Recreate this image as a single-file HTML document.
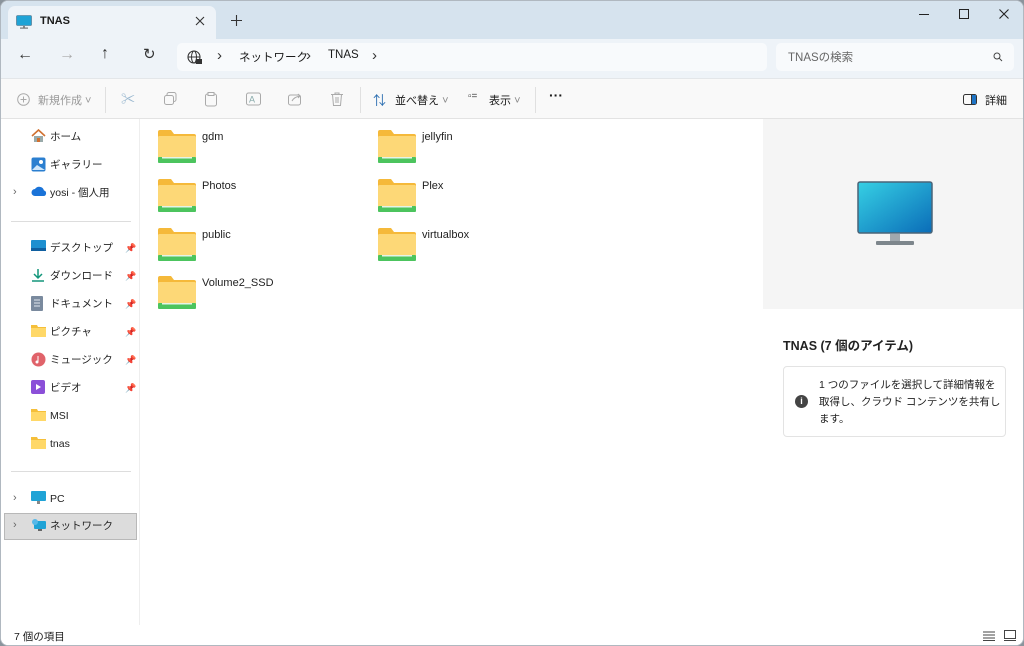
<!DOCTYPE html>
<html><head><meta charset="utf-8">
<style>
*{box-sizing:border-box;margin:0;padding:0}
body{width:1024px;height:646px;overflow:hidden;background:#8a949c;font-family:"Liberation Sans","Noto Sans CJK JP",sans-serif;font-size:11px;color:#1a1a1a;position:relative}
.win{position:absolute;left:0;top:0;width:1024px;height:646px;background:#fff;border-radius:8px;overflow:hidden;border:1px solid #b0b8c0}
.abs{position:absolute}
.title{left:0;top:0;width:1024px;height:38px;background:#d6e3ee}
.tab{left:7px;top:5px;width:208px;height:34px;background:#eef3f8;border-radius:7px 7px 0 0}
.navrow{left:0;top:38px;width:1024px;height:39px;background:#eef3f8}
.addr{left:176px;top:4px;width:590px;height:28px;background:#f8fafc;border-radius:5px}
.search{left:775px;top:4px;width:238px;height:28px;background:#f8fafc;border-radius:5px}
.tool{left:0;top:77px;width:1024px;height:41px;background:#f9f9f9;border-top:1px solid #e3e6e9;border-bottom:1px solid #e3e3e3}
.side{left:0;top:118px;width:139px;height:506px;background:#fff;border-right:1px solid #eee}
.item{position:absolute;left:30px;font-size:10.5px;height:16px;line-height:16px;color:#222}
.item svg{position:absolute;left:0;top:0}
.item span{position:absolute;left:19px;white-space:nowrap}
.pin{position:absolute;left:124px;color:#888;font-size:9px}
.chev{position:absolute;left:12px;color:#666;font-size:11px}
.fold{position:absolute;width:200px;height:40px}
.fold span{position:absolute;left:44px;top:1px;font-size:11px;color:#222}
.det{left:762px;top:118px;width:262px;height:506px;background:#fff}
.status{left:0;top:624px;width:1024px;height:22px;background:#fff}
.sep{position:absolute;top:8px;width:1px;height:26px;background:#e0e0e0}
.ic{position:absolute;top:13px}
</style></head><body>
<div class="win">
<div class="abs title">
 <div class="abs tab">
  <svg class="abs" style="left:8px;top:9px" width="16" height="14" viewBox="0 0 16 14"><rect x="0.5" y="0.5" width="15" height="10" rx="1" fill="#1fa3d6" stroke="#4a6a80" stroke-width=".6"/><rect x="7" y="11" width="2" height="2" fill="#888"/><rect x="4" y="12.5" width="8" height="1.2" fill="#777"/></svg>
  <span class="abs" style="left:32px;top:9px;font-size:11px;font-weight:bold">TNAS</span>
  <svg class="abs" style="left:187px;top:10px" width="10" height="10"><path d="M1 1l8 8M9 1l-8 8" stroke="#333" stroke-width="1.1"/></svg>
 </div>
 <svg class="abs" style="left:230px;top:14px" width="11" height="11"><path d="M5.5 0v11M0 5.5h11" stroke="#333" stroke-width="1.1"/></svg>
 <div class="abs" style="left:918px;top:13px;width:10px;height:1px;background:#222"></div>
 <div class="abs" style="left:958px;top:8px;width:10px;height:10px;border:1px solid #222"></div>
 <svg class="abs" style="left:998px;top:8px" width="10" height="10"><path d="M0.5 0.5l9 9M9.5 0.5l-9 9" stroke="#222" stroke-width="1.1"/></svg>
</div>
<div class="abs navrow">
 <span class="abs" style="left:16px;top:7px;font-size:16px;color:#333">←</span>
 <span class="abs" style="left:58px;top:7px;font-size:16px;color:#aaa">→</span>
 <span class="abs" style="left:100px;top:6px;font-size:16px;color:#333">↑</span>
 <span class="abs" style="left:142px;top:6px;font-size:15px;color:#333">↻</span>
 <div class="abs addr">
  <svg class="abs" style="left:10px;top:7px" width="16" height="16" viewBox="0 0 16 16"><circle cx="7" cy="7" r="6" fill="none" stroke="#333" stroke-width="1.1"/><ellipse cx="7" cy="7" rx="2.5" ry="6" fill="none" stroke="#333" stroke-width="1"/><line x1="1" y1="7" x2="13" y2="7" stroke="#333"/><rect x="9" y="9" width="6" height="5" fill="#333"/></svg>
  <span class="abs" style="left:40px;top:4px;color:#333;font-size:15px">›</span>
  <span class="abs" style="left:62px;top:6px;font-size:11.5px">ネットワーク</span>
  <span class="abs" style="left:129px;top:4px;color:#333;font-size:15px">›</span>
  <span class="abs" style="left:151px;top:6px;font-size:11.5px">TNAS</span>
  <span class="abs" style="left:195px;top:4px;color:#333;font-size:15px">›</span>
 </div>
 <div class="abs search">
  <span class="abs" style="left:12px;top:6px;color:#666;font-size:11.5px">TNASの検索</span>
  <svg class="abs" style="left:217px;top:9px" width="10" height="10" viewBox="0 0 10 10"><circle cx="4" cy="4" r="3" fill="none" stroke="#444"/><line x1="6.3" y1="6.3" x2="9" y2="9" stroke="#444"/></svg>
 </div>
</div>
<div class="abs tool">
 <svg class="abs" style="left:16px;top:14px" width="13" height="13"><circle cx="6.5" cy="6.5" r="5.8" fill="none" stroke="#aaa"/><path d="M6.5 3.5v6M3.5 6.5h6" stroke="#aaa"/></svg>
 <span class="abs" style="left:37px;top:13px;color:#999">新規作成 ˅</span>
 <div class="sep" style="left:104px"></div>
 <span class="ic" style="left:120px;color:#9ab8d0;font-size:14px;top:10px">✂</span>
 <svg class="ic" style="left:163px" width="13" height="14"><rect x="3" y="0.5" width="9" height="9" rx="2" fill="none" stroke="#aaa"/><rect x="0.5" y="3.5" width="9" height="9" rx="2" fill="#f9f9f9" stroke="#aaa"/></svg>
 <svg class="ic" style="left:204px" width="12" height="15"><rect x="0.5" y="2" width="11" height="12" rx="2" fill="none" stroke="#aaa"/><rect x="3" y="0.5" width="6" height="3" fill="#f9f9f9" stroke="#aaa"/></svg>
 <svg class="ic" style="left:245px" width="15" height="14"><rect x="0.5" y="1" width="14" height="12" rx="2" fill="none" stroke="#aaa"/><text x="3" y="10.5" font-size="9" fill="#8aa">A</text></svg>
 <svg class="ic" style="left:287px" width="14" height="14"><rect x="0.5" y="3" width="12" height="10" rx="2" fill="none" stroke="#aaa"/><path d="M4 9 Q6 5 12 4 M10 2l2 2-2 2" fill="none" stroke="#aaa"/></svg>
 <svg class="ic" style="left:330px" width="12" height="14"><path d="M0 2.5h12M4 2.5V1h4v1.5M1.5 2.5l1 11h7l1-11M5 5v6M7 5v6" fill="none" stroke="#aaa"/></svg>
 <div class="sep" style="left:359px"></div>
 <span class="abs" style="left:372px;top:11px;font-size:13px;color:#2a6db0">⇅</span>
 <span class="abs" style="left:394px;top:13px">並べ替え <span style="color:#888">˅</span></span>
 <span class="abs" style="left:467px;top:12px;font-size:10px;color:#444">▫=</span>
 <span class="abs" style="left:488px;top:13px">表示 <span style="color:#888">˅</span></span>
 <div class="sep" style="left:534px"></div>
 <span class="abs" style="left:548px;top:8px;font-size:14px;font-weight:bold">···</span>
 <svg class="abs" style="left:962px;top:15px" width="14" height="11"><rect x="0.5" y="0.5" width="13" height="10" rx="2" fill="none" stroke="#333"/><rect x="8" y="1" width="1" height="9" fill="#333"/><rect x="9" y="1" width="4" height="9" fill="#1f74c5"/></svg>
 <span class="abs" style="left:984px;top:13px">詳細</span>
</div>
<div class="abs side">
 <div class="item" style="top:10px"><svg width="15" height="14"><path d="M1 7L7.5 1 14 7" fill="none" stroke="#d07030" stroke-width="1.6"/><rect x="3" y="7" width="9" height="6" fill="#9aa"/><rect x="6" y="9" width="3" height="4" fill="#d07030"/></svg><span>ホーム</span></div>
 <div class="item" style="top:38px"><svg width="15" height="15"><rect x="0.5" y="0.5" width="14" height="14" rx="2" fill="#2b7fd0"/><path d="M1 13 L6 8 L14 13Z" fill="#cfe6fa"/><circle cx="10" cy="5" r="2" fill="#fff"/></svg><span>ギャラリー</span></div>
 <span class="chev" style="top:67px">›</span>
 <div class="item" style="top:66px"><svg width="16" height="12"><path d="M4 11a3.5 3.5 0 010-7 5 5 0 019 1.5 2.8 2.8 0 01-.5 5.5z" fill="#1a73d8"/></svg><span>yosi - 個人用</span></div>
 <div class="abs" style="left:10px;top:102px;width:120px;height:1px;background:#ddd"></div>
 <div class="item" style="top:121px"><svg width="15" height="12"><rect width="15" height="11" rx="1" fill="#1d8fd0"/><rect y="8" width="15" height="3" fill="#0f5fa0"/></svg><span>デスクトップ</span></div><span class="pin" style="top:124px">📌</span>
 <div class="item" style="top:149px"><svg width="14" height="14"><path d="M7 1v9M3 6l4 4 4-4" fill="none" stroke="#12967a" stroke-width="1.5"/><path d="M1 13h12" stroke="#12967a" stroke-width="1.5"/></svg><span>ダウンロード</span></div><span class="pin" style="top:152px">📌</span>
 <div class="item" style="top:177px"><svg width="12" height="15"><rect width="12" height="15" rx="1" fill="#7a8a9e"/><path d="M3 4h6M3 7h6M3 10h6" stroke="#e0e6ee"/></svg><span>ドキュメント</span></div><span class="pin" style="top:180px">📌</span>
 <div class="item" style="top:205px"><svg width="15" height="13"><path d="M0 1h6l1 2h8v10H0z" fill="#f5bf3a"/><rect y="4" width="15" height="9" fill="#ffd868"/></svg><span>ピクチャ</span></div><span class="pin" style="top:208px">📌</span>
 <div class="item" style="top:233px"><svg width="15" height="15"><circle cx="7.5" cy="7.5" r="7" fill="#e0636a"/><path d="M7 4v6" stroke="#fff"/><circle cx="6" cy="10" r="1.5" fill="#fff"/></svg><span>ミュージック</span></div><span class="pin" style="top:236px">📌</span>
 <div class="item" style="top:261px"><svg width="14" height="14"><rect width="14" height="14" rx="2" fill="#8b4fd8"/><path d="M5 4l5 3-5 3z" fill="#fff"/></svg><span>ビデオ</span></div><span class="pin" style="top:264px">📌</span>
 <div class="item" style="top:289px"><svg width="15" height="13"><path d="M0 1h6l1 2h8v10H0z" fill="#f5bf3a"/><rect y="4" width="15" height="9" fill="#ffd868"/></svg><span>MSI</span></div>
 <div class="item" style="top:317px"><svg width="15" height="13"><path d="M0 1h6l1 2h8v10H0z" fill="#f5bf3a"/><rect y="4" width="15" height="9" fill="#ffd868"/></svg><span>tnas</span></div>
 <div class="abs" style="left:10px;top:352px;width:120px;height:1px;background:#ddd"></div>
 <span class="chev" style="top:373px">›</span>
 <div class="item" style="top:372px"><svg width="15" height="14"><rect width="15" height="10" rx="1" fill="#1fa3d6"/><rect x="6" y="10" width="3" height="3" fill="#888"/></svg><span>PC</span></div>
 <div class="abs" style="left:3px;top:394px;width:133px;height:27px;background:#dcdcdc;border:1px solid #b8b8b8"></div>
 <span class="chev" style="top:400px">›</span>
 <div class="item" style="top:399px"><svg width="16" height="14"><rect x="3" y="3" width="12" height="8" rx="1" fill="#1fa3d6"/><rect x="7" y="11" width="4" height="2" fill="#666"/><circle cx="4" cy="4" r="3" fill="#56b8e8"/></svg><span>ネットワーク</span></div>
</div>
<div class="abs" style="left:139px;top:118px;width:623px;height:506px;background:#fff">
 <div id="folders"></div>
</div>
<div class="abs det">
 <div class="abs" style="left:0;top:0;width:262px;height:190px;background:#f5f5f5"></div>
 <svg class="abs" style="left:94px;top:62px" width="76" height="66" viewBox="0 0 76 66"><defs><linearGradient id="g" x1="0" y1="0" x2="1" y2="1"><stop offset="0" stop-color="#36d0e4"/><stop offset="1" stop-color="#0a6cb8"/></linearGradient></defs><rect x="1" y="1" width="74" height="51" rx="2" fill="url(#g)" stroke="#4a6478" stroke-width="1.5"/><rect x="33" y="53" width="10" height="7" fill="#a0a8ae"/><rect x="19" y="60" width="38" height="4" rx="1" fill="#7d868c"/></svg>
 <div class="abs" style="left:20px;top:216px;font-size:12.5px;font-weight:bold;color:#222">TNAS (7 個のアイテム)</div>
 <div class="abs" style="left:20px;top:247px;width:223px;height:71px;border:1px solid #e3e3e3;border-radius:4px;background:#fff">
  <div class="abs" style="left:11px;top:28px;width:13px;height:13px;border-radius:50%;background:#444;color:#fff;font-size:9px;text-align:center;line-height:13px;font-weight:bold">i</div>
  <div class="abs" style="left:35px;top:10px;width:186px;font-size:10.5px;line-height:17px;color:#222">1 つのファイルを選択して詳細情報を取得し、クラウド コンテンツを共有します。</div>
 </div>
</div>
<div class="abs status">
 <span class="abs" style="left:13px;top:4px;font-size:10.5px">7 個の項目</span>
 <svg class="abs" style="left:982px;top:6px" width="12" height="10"><path d="M0 1h12M0 4h12M0 7h12M0 9.5h12" stroke="#444"/></svg>
 <svg class="abs" style="left:1003px;top:5px" width="12" height="11"><rect x="0.5" y="0.5" width="11" height="8" fill="none" stroke="#444"/><path d="M0 10.5h12" stroke="#444"/></svg>
</div>
</div>
<script>
var f=[["gdm",0,0],["jellyfin",1,0],["Photos",0,1],["Plex",1,1],["public",0,2],["virtualbox",1,2],["Volume2_SSD",0,3]];
var h="";
f.forEach(function(a){
 var x=18+a[1]*220,y=11+[0,49,98,146][a[2]];
 h+='<div class="fold" style="left:'+x+'px;top:'+y+'px"><svg width="38" height="34" viewBox="0 0 38 34"><path d="M0 2a2 2 0 012-2h11l3 4h20a2 2 0 012 2v26H0z" fill="#f5b93a"/><rect x="0" y="6" width="38" height="26" rx="1.5" fill="#fdd877"/><rect x="0" y="27" width="38" height="6" rx="1" fill="#4cc45e"/><rect x="4" y="27" width="30" height="1.5" fill="#e6f3e6"/></svg><span>'+a[0]+'</span></div>';
});
document.getElementById("folders").innerHTML=h;
</script>
</body></html>
